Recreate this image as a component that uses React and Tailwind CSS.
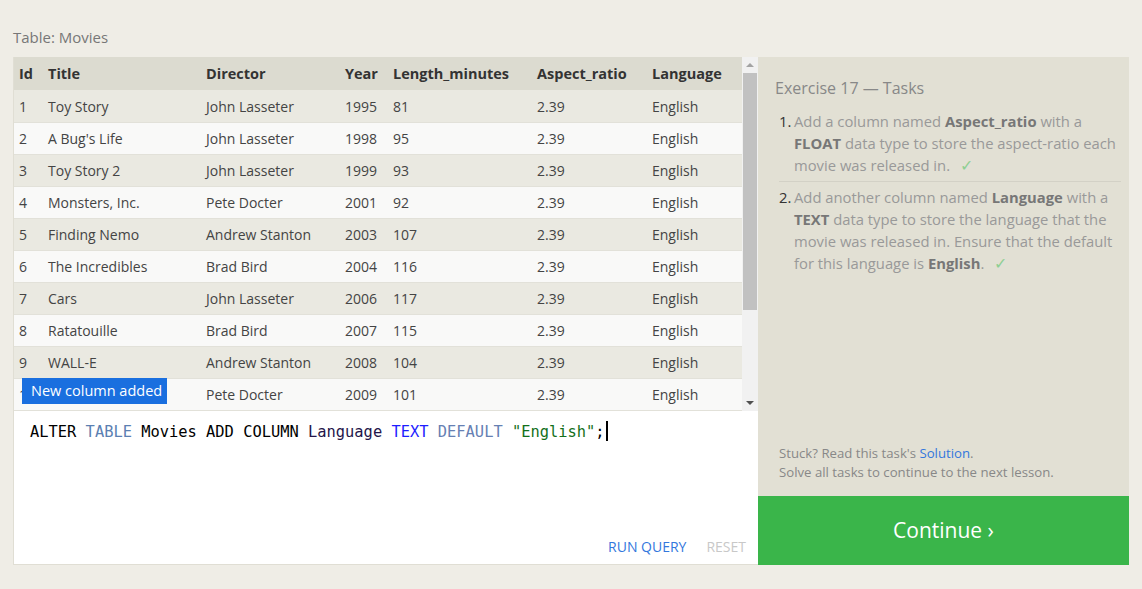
import React from 'react'

const MOVIES = [
  [1, 'Toy Story', 'John Lasseter', 1995, 81],
  [2, "A Bug's Life", 'John Lasseter', 1998, 95],
  [3, 'Toy Story 2', 'John Lasseter', 1999, 93],
  [4, 'Monsters, Inc.', 'Pete Docter', 2001, 92],
  [5, 'Finding Nemo', 'Andrew Stanton', 2003, 107],
  [6, 'The Incredibles', 'Brad Bird', 2004, 116],
  [7, 'Cars', 'John Lasseter', 2006, 117],
  [8, 'Ratatouille', 'Brad Bird', 2007, 115],
  [9, 'WALL-E', 'Andrew Stanton', 2008, 104],
  [10, 'Up', 'Pete Docter', 2009, 101],
  [11, 'Toy Story 3', 'Lee Unkrich', 2010, 103],
  [12, 'Cars 2', 'John Lasseter', 2011, 120],
]

const COLS = ['w-[29px]', 'w-[158px]', 'w-[139px]', 'w-[48px]', 'w-[144px]', 'w-[115px]', 'w-[95px]']
const HEAD = ['Id', 'Title', 'Director', 'Year', 'Length_minutes', 'Aspect_ratio', 'Language']

export default function App() {
  return (
    <div className="min-h-[589px] bg-[#efede6] px-[13px] pt-[26px] font-['Open_Sans',sans-serif] text-[#333]">
      <p className="text-[15px] leading-[22px] text-[#777] mb-[9px]">Table: Movies</p>

      <div className="flex h-[508px]">
        {/* ── Left: table + editor ── */}
        <div className="flex flex-col w-[745px] border-l border-b border-[#e0ded4]">
          <div className="relative flex h-[354px] overflow-hidden">
            <div className="flex-1 overflow-hidden">
              <table className="table-fixed border-collapse w-[728px]">
                <colgroup>
                  {COLS.map((c, i) => <col key={i} className={c} />)}
                </colgroup>
                <thead>
                  <tr className="bg-[#dcdbd0] h-[33px]">
                    {HEAD.map(h => (
                      <th key={h} className="text-left font-bold text-[14.5px] pl-[5px] pt-[1px] text-[#333] whitespace-nowrap">{h}</th>
                    ))}
                  </tr>
                </thead>
                <tbody>
                  {MOVIES.map((m, i) => (
                    <tr key={m[0]} className={`h-[32px] border-b border-[#e2e1d9] ${i % 2 === 0 ? 'bg-[#eae9e1]' : 'bg-[#f9f9f8]'}`}>
                      {[...m, '2.39', 'English'].map((v, j) => (
                        <td key={j} className="pl-[5px] pt-[1px] text-[14px] text-[#444] whitespace-nowrap">{v}</td>
                      ))}
                    </tr>
                  ))}
                </tbody>
              </table>
            </div>

            {/* scrollbar */}
            <div className="w-[16px] bg-[#f1f1f1] flex flex-col items-center">
              <div className="h-[16px] flex items-center justify-center">
                <div className="w-0 h-0 border-l-[4px] border-r-[4px] border-b-[4px] border-transparent border-b-[#a3a3a3]" />
              </div>
              <div className="w-[14px] h-[237px] bg-[#c1c1c1]" />
              <div className="flex-1" />
              <div className="h-[16px] flex items-center justify-center">
                <div className="w-0 h-0 border-l-[4px] border-r-[4px] border-t-[4px] border-transparent border-t-[#505050]" />
              </div>
            </div>

            <div className="absolute left-[8px] top-[321px] w-[145px] h-[26px] bg-[#1a6fdf] text-white text-[14.5px] leading-[26px] pl-[9px]">
              New column added
            </div>
          </div>

          <div className="flex-1 bg-white flex flex-col">
            <div className="pl-[16px] pt-[10px] font-['DejaVu_Sans_Mono',monospace] text-[15.4px] leading-[22px] text-black whitespace-pre">
              <span>ALTER </span>
              <span className="text-[#5b80b2]">TABLE</span>
              <span> Movies ADD COLUMN </span>
              <span className="text-[#25164a]">Language</span>
              <span> </span>
              <span className="text-[#1e1eff]">TEXT</span>
              <span> </span>
              <span className="text-[#6680b3]">DEFAULT</span>
              <span> </span>
              <span className="text-[#13701a]">"English"</span>
              <span>;</span>
              <span className="inline-block w-[2px] h-[20px] bg-black ml-[1px] align-[-4px]" />
            </div>
            <div className="flex-1" />
            <div className="flex justify-end gap-[20px] pr-[12px] pb-[7px] text-[14px] leading-[20px]">
              <span className="text-[#3377dd]">RUN QUERY</span>
              <span className="text-[#c8c8c8]">RESET</span>
            </div>
          </div>
        </div>

        {/* ── Right: tasks ── */}
        <div className="w-[371px] flex flex-col">
          <div className="flex-1 bg-[#e2e0d4] flex flex-col pl-[17px] pr-[8px] pt-[20px] pb-[14px]">
            <p className="text-[16px] leading-[22px] text-[#888]">Exercise 17 — Tasks</p>
            <ol className="mt-[11px] text-[14.8px] leading-[22px] text-[#999] pl-[4px]">
              <li className="flex pb-[5px] border-b border-[#d3d1c6]">
                <span className="w-[15px] shrink-0 text-[#333]">1.</span>
                <span>
                  Add a column named <b className="text-[#777]">Aspect_ratio</b> with a <b className="text-[#777]">FLOAT</b> data type to store the aspect-ratio each movie was released in.
                  <span className="text-[#8fcf93] text-[16px] ml-[10px]">✓</span>
                </span>
              </li>
              <li className="flex pt-[4px]">
                <span className="w-[15px] shrink-0 text-[#333]">2.</span>
                <span>
                  Add another column named <b className="text-[#777]">Language</b> with a <b className="text-[#777]">TEXT</b> data type to store the language that the movie was released in. Ensure that the default for this language is <b className="text-[#777]">English</b>.
                  <span className="text-[#8fcf93] text-[16px] ml-[10px]">✓</span>
                </span>
              </li>
            </ol>
            <div className="flex-1" />
            <p className="text-[13.2px] leading-[19px] text-[#888] pl-[4px]">
              Stuck? Read this task's <span className="text-[#3377dd]">Solution</span>.
            </p>
            <p className="text-[13.2px] leading-[19px] text-[#888] pl-[4px]">Solve all tasks to continue to the next lesson.</p>
          </div>
          <div className="h-[69px] bg-[#3ab54a] flex items-center justify-center text-white text-[21px] pt-[1px]">
            Continue ›
          </div>
        </div>
      </div>
    </div>
  )
}
